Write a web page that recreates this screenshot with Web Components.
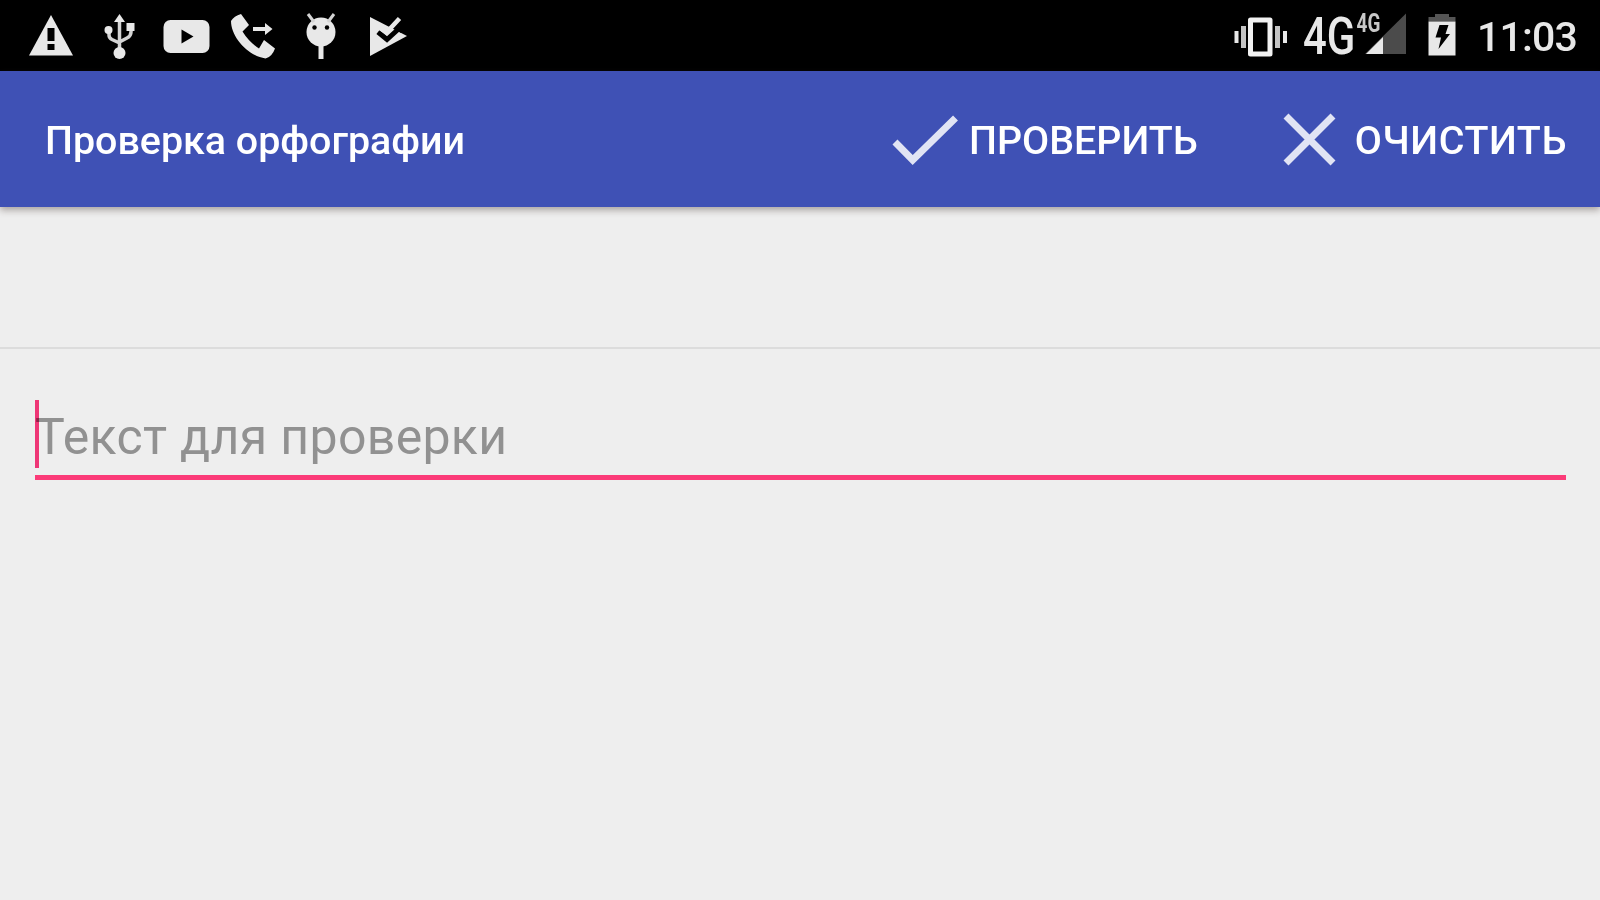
<!DOCTYPE html>
<html lang="ru">
<head>
<meta charset="utf-8">
<title>Проверка орфографии</title>
<style>
body {
  margin: 0;
  background: #eee;
  font-family: Roboto, "Noto Sans", sans-serif;
}
</style>
</head>
<body>
<spell-app></spell-app>

<script>
// status bar glyphs, drawn in screen units: [viewBox, markup]
const icons = {
  warning: ['28 0 46 70', `<path d="M51 15L73 55.500H29z"/><path fill="#000" d="M47.500 28h7v13h-7zM47.500 44h7v6h-7z"/>`],
  usb: ['104 0 32 70', `
    <path fill="none" stroke="#d4d4d4" stroke-width="3.500" d="M119.500 20V52M109 31V35Q109 38 112 39.500L119.500 43M131 27V32Q131 36 127 38L119.500 42"/>
    <path d="M119.500 14L125 22H114z"/><circle cx="108.500" cy="30" r="4"/>
    <path d="M126.500 23h8v8h-8z"/><circle cx="119.500" cy="53" r="6"/>`],
  video: ['162 0 48 70', `<rect x="163.500" y="20" width="46" height="33" rx="7"/><path fill="#000" d="M181.500 29.500L193.500 36.500L181.500 43.500z"/>`],
  phone: ['230 0 46 70', `
    <path d="M231 21Q234 16 241 14L249 25L242.500 31.500Q249 42 259 48.500L264 40L275 48.500Q272 57 265.500 58.500C248 56 231 37 231 21z"/>
    <path d="M253 27h12v-4l7.500 6L265 35v-4h-12z"/>`],
  droid: ['304 0 34 70', `
    <circle cx="321" cy="32" r="14.500"/>
    <path stroke="#d4d4d4" stroke-width="3" fill="none" d="M308 14L314 22M334 14L328 22"/><path d="M318.500 44h5v15h-5z"/>
    <circle cx="314.500" cy="27.500" r="2.200" fill="#000"/><circle cx="327" cy="27.500" r="2.200" fill="#000"/>`],
  task: ['370 0 38 70', `
    <path d="M371 17L408 36L371 56z"/>
    <path fill="none" stroke="#000" stroke-width="5" d="M379 32L388 39.500L405 24"/>
    <path fill="#000" d="M391 25L400 14L410 22L402 33z"/>
    <path fill="none" stroke="#e8e8e8" stroke-width="4.500" d="M380 27.500L387.500 32.500L400.500 18.500"/>`],
  vibrate: ['1234 0 54 70', `
    <path fill="none" stroke="#f2f2f2" stroke-width="5" stroke-linejoin="round" d="M1250.500 20h19.500v34h-19.500z"/>
    <path fill="#c4c4c4" d="M1241 26h5v22h-5zM1275 26h5v22h-5z"/><path d="M1234.500 31h4v12h-4zM1283 31h4v12h-4z"/>`],
  signal: ['1302 0 104 70', `
    <path fill="#4b4b4b" d="M1406.500 13V54H1365z"/><path d="M1383 37V54H1366z"/>
    <text transform="translate(1303 54) scale(.82 1)" font-size="51" font-weight="500">4G</text>
    <text transform="translate(1356.500 32) scale(.76 1)" font-size="25" font-weight="700" fill="#c8c8c8">4G</text>`],
  battery: ['1428 0 30 70', `
    <path fill="#555" d="M1436 14h14v3h6.500v4.500h-27V17h6.500z"/><path d="M1429.500 21.500h27V55.500h-27z"/>
    <path fill="#000" d="M1440.500 25H1449.500L1446.500 34H1451L1439.500 49L1442 37.500H1436.500z"/>`]
};

class StatusIcon extends HTMLElement {
  constructor() {
    super();
    this.attachShadow({ mode: 'open' });
  }
  connectedCallback() {
    const [box, shape] = icons[this.getAttribute('name')];
    const [, , w, h] = box.split(' ');
    this.shadowRoot.innerHTML = `
      <style>
        :host { display: block; flex: none; }
        svg { display: block; fill: #e8e8e8; font-family: Roboto, sans-serif; }
      </style>
      <svg width="${w}" height="${h}" viewBox="${box}">${shape}</svg>`;
  }
}
customElements.define('status-icon', StatusIcon);

class StatusBar extends HTMLElement {
  constructor() {
    super();
    this.attachShadow({ mode: 'open' });
    this.shadowRoot.innerHTML = `
      <style>
        :host {
          display: flex;
          justify-content: space-between;
          box-sizing: border-box;
          height: 71px;
          padding: 0 23px 0 28px;
          background: #000;
          color: #e8e8e8;
        }
        div { display: flex; }
        .left { gap: 29px; }
        .right { gap: 17px; }
        .right status-icon:nth-child(2) { margin: 0 4px 0 -3px; }
        time {
          margin-left: 3px;
          font-size: 41px;
          font-weight: 500;
          letter-spacing: -.8px;
          line-height: 48px;
          padding-top: 13px;
        }
      </style>
      <div class="left">
        <status-icon name="warning"></status-icon>
        <status-icon name="usb" style="margin-left: 1px"></status-icon>
        <status-icon name="video" style="margin-left: -3px"></status-icon>
        <status-icon name="phone" style="margin-left: -9px"></status-icon>
        <status-icon name="droid" style="margin-left: -1px"></status-icon>
        <status-icon name="task" style="margin-left: 2px"></status-icon>
      </div>
      <div class="right">
        <status-icon name="vibrate"></status-icon>
        <status-icon name="signal"></status-icon>
        <status-icon name="battery"></status-icon>
        <time><slot></slot></time>
      </div>`;
  }
}
customElements.define('status-bar', StatusBar);

class AppBar extends HTMLElement {
  constructor() {
    super();
    this.attachShadow({ mode: 'open' });
    this.shadowRoot.innerHTML = `
      <style>
        :host {
          display: flex;
          align-items: center;
          box-sizing: border-box;
          height: 136px;
          padding: 3px 33px 0 45px;
          background: #3f51b5;
          color: #fff;
          font-size: 39.4px;
          font-weight: 500;
          box-shadow: 0 3px 7px rgba(60, 45, 40, .4);
        }
        .title { flex: 1; }
        nav { display: flex; gap: 85px; }
      </style>
      <span class="title"><slot></slot></span>
      <nav><slot name="action"></slot></nav>`;
  }
}
customElements.define('app-bar', AppBar);

class BarAction extends HTMLElement {
  constructor() {
    super();
    this.attachShadow({ mode: 'open' });
  }
  connectedCallback() {
    const check = this.getAttribute('icon') === 'check';
    const box = check ? '892 111 66 60' : '1284 111 53 60';
    const d = check ? 'M895 142L912.700 160L955.500 118' : 'M1287 116L1334 163M1334 116L1287 163';
    this.shadowRoot.innerHTML = `
      <style>
        :host {
          display: flex;
          align-items: center;
          gap: ${check ? 11 : 19}px;
          letter-spacing: ${check ? 0 : .6}px;
          white-space: nowrap;
        }
        svg { flex: none; fill: none; stroke: #e1e4f4; stroke-width: 7; }
      </style>
      <svg width="${box.split(' ')[2]}" height="60" viewBox="${box}"><path d="${d}"/></svg>
      <span><slot></slot></span>`;
  }
}
customElements.define('bar-action', BarAction);

class SpellField extends HTMLElement {
  constructor() {
    super();
    this.attachShadow({ mode: 'open' });
    this.shadowRoot.innerHTML = `
      <style>
        :host {
          display: block;
          position: relative;
          box-sizing: border-box;
          height: 80px;
          margin: 51px 34px 0 35px;
          padding: 4px 0 0;
          border-bottom: 5px solid #fb3b78;
          color: #919191;
          font-size: 50px;
          letter-spacing: .32px;
          line-height: 66px;
          white-space: nowrap;
        }
        /* caret lies over the first letter of the hint */
        i {
          position: absolute;
          left: 0;
          top: 0;
          width: 4px;
          height: 68px;
          background: #ff3a7e;
          mix-blend-mode: multiply;
        }
      </style>
      <i></i><span><slot></slot></span>`;
  }
}
customElements.define('spell-field', SpellField);

class SpellApp extends HTMLElement {
  constructor() {
    super();
    this.attachShadow({ mode: 'open' });
    this.shadowRoot.innerHTML = `
      <style>
        :host { display: block; height: 900px; overflow: hidden; background: #eee; }
        .result { height: 140px; border-bottom: 2px solid #dcdcdc; }
      </style>
      <status-bar>11:03</status-bar>
      <app-bar>Проверка орфографии
        <bar-action slot="action" icon="check">ПРОВЕРИТЬ</bar-action>
        <bar-action slot="action" icon="clear">ОЧИСТИТЬ</bar-action>
      </app-bar>
      <div class="result"></div>
      <spell-field>Текст для проверки</spell-field>`;
  }
}
customElements.define('spell-app', SpellApp);
</script>
</body>
</html>
